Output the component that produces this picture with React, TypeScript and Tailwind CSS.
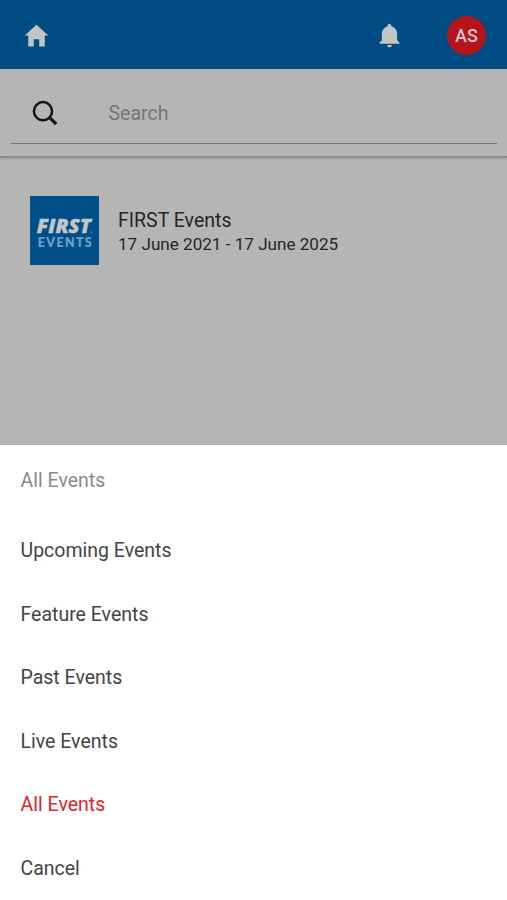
import React from 'react';
import { IoMdHome, IoMdNotifications } from 'react-icons/io';

const options = ['Upcoming Events', 'Feature Events', 'Past Events', 'Live Events', 'All Events', 'Cancel'];

const SearchIcon = () => (
    <svg className="w-[26px] h-[26px] shrink-0" viewBox="0 0 26 26" fill="none" stroke="#141414">
        <circle cx="11" cy="11.2" r="9.1" strokeWidth="2.5" />
        <path d="M17.3 17.3 24.2 24" strokeWidth="3.2" />
    </svg>
);

const EventLogo = () => (
    <svg className="w-[69px] h-[69px] shrink-0 bg-[#004f88]" viewBox="0 0 69 69">
        <text x="6.8" y="37.2" fontFamily="Open Sans, sans-serif" fontWeight="800" fontStyle="italic" fontSize="19" textLength="54" lengthAdjust="spacingAndGlyphs" fill="#c4c6c8" stroke="#c4c6c8" strokeWidth="0.4">
            FIRST
        </text>
        <circle cx="61.2" cy="36.2" r="0.6" fill="#8fa5b8" />
        <text x="7.7" y="50.7" fontFamily="Lato, sans-serif" fontWeight="900" fontSize="12.4" textLength="54" fill="#719fc9" stroke="#719fc9" strokeWidth="0.2">
            EVENTS
        </text>
    </svg>
);

const Header = () => (
    <header className="h-[69px] shrink-0 flex items-center bg-[#004c84] pt-px pl-[22px] pr-[21px] text-[#c4c4c4]">
        <IoMdHome className="w-[29px] h-[29px]" />
        <IoMdNotifications className="w-[29px] h-[29px] ml-auto" />
        <div className="ml-[43px] w-[39px] h-[39px] rounded-full bg-[#b5141d] flex items-center justify-center text-[18px] font-medium text-[#d0c4c4]">
            AS
        </div>
    </header>
);

const SearchBar = () => (
    <div className="h-[89px] shrink-0 px-[11px] pt-[5px] border-b-2 border-[#8b8b8b] shadow-[0_1px_2px_rgba(0,0,0,0.15)]">
        <div className="h-[70px] flex items-center border-b border-[#767676] pt-2 pl-[21px] -mr-px">
            <SearchIcon />
            <span className="ml-[50.5px] pt-0.5 text-[19.5px] leading-6 text-[#757575]">Search</span>
        </div>
    </div>
);

const EventRow = () => (
    <div className="flex items-center pl-[30px] pt-[38px]">
        <EventLogo />
        <div className="ml-[19px] pt-[3px] text-[#262626]">
            <div className="text-[19.5px] leading-6">FIRST Events</div>
            <div className="text-[17.1px] leading-[23px]">17 June 2021 - 17 June 2025</div>
        </div>
    </div>
);

const ActionSheet = () => (
    <div className="h-[455px] shrink-0 bg-white px-[20.5px] text-[19.5px] text-[#444444]">
        <div className="h-[72px] flex items-center text-[#8a8a8a]">All Events</div>
        <div className="pt-[1.4px]">
            {options.map((option) => (
                <div
                    key={option}
                    className={`h-[63.5px] flex items-center pt-px ${option === 'All Events' ? 'text-[#e3222b]' : ''}`}
                >
                    {option}
                </div>
            ))}
        </div>
    </div>
);

const App = () => {
    return (
        <div className="h-[900px] w-[507px] flex flex-col overflow-hidden bg-[#b5b5b5] font-[Roboto,sans-serif]">
            <Header />
            <SearchBar />
            <main className="flex-1">
                <EventRow />
            </main>
            <ActionSheet />
        </div>
    );
};

export default App;
